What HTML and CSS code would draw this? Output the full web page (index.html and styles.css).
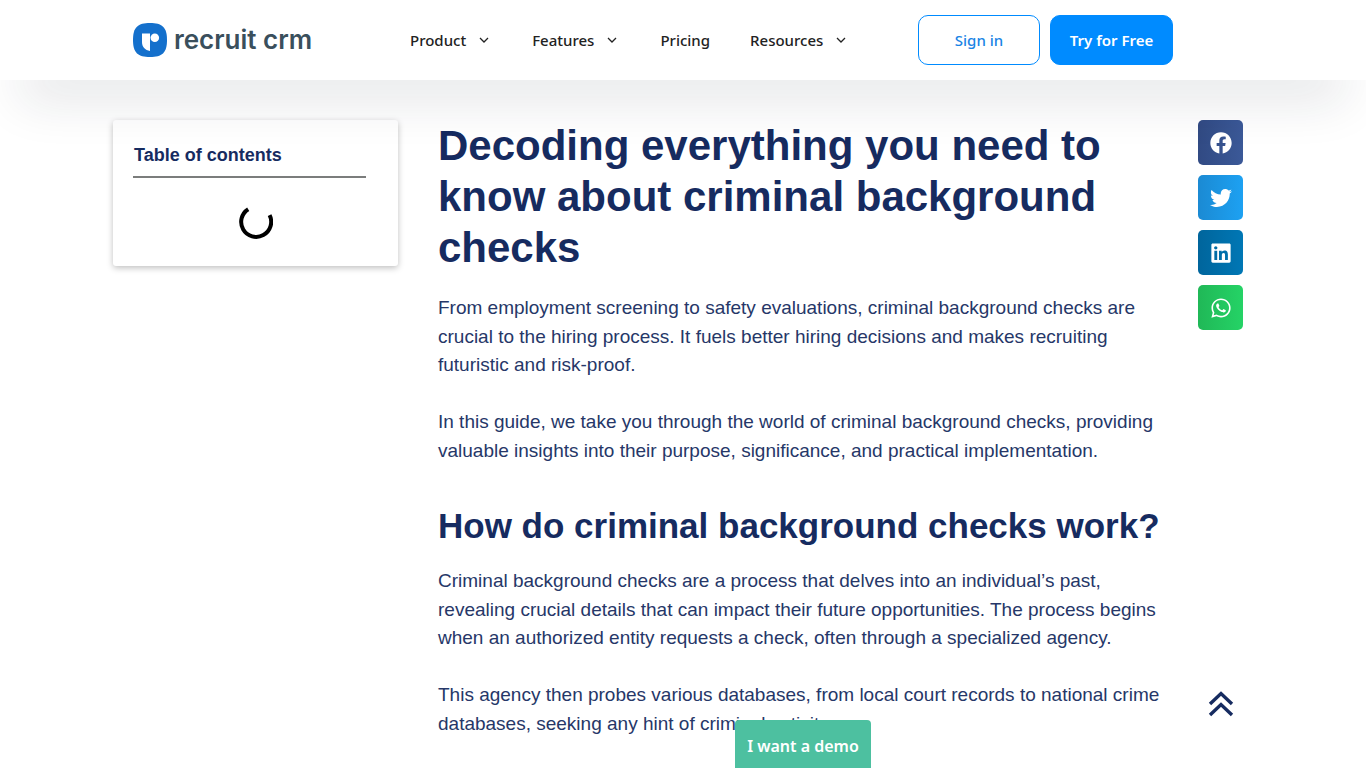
FILE: index.html
```html
<!DOCTYPE html>
<html lang="en">
<head>
  <meta charset="UTF-8" />
  <meta name="viewport" content="width=device-width, initial-scale=1" />
  <title>Criminal background checks - Recruit CRM</title>
  <link rel="stylesheet" href="styles.css">
</head>
<body>
  <header class="site-header">
    <div class="header-inner">
      <a href="#" class="logo">
        <svg width="34" height="34" viewBox="0 0 34 34" aria-hidden="true">
          <path fill="#1470cc" d="M17 0C29 0 34 4 34 17S29 34 17 34 0 30 0 17 5 0 17 0z"/>
          <path fill="#fff" d="M9 10.500h8v17.500c-5-1-8-4-8-9z"/>
          <circle fill="#fff" cx="21.800" cy="14.800" r="4.300"/>
        </svg>
        <span>recruit crm</span>
      </a>
      <nav class="main-nav">
        <a href="#">Product <svg class="arrow" viewBox="0 0 10 6"><path d="M1 1l4 4 4-4"/></svg></a>
        <a href="#">Features <svg class="arrow" viewBox="0 0 10 6"><path d="M1 1l4 4 4-4"/></svg></a>
        <a href="#">Pricing</a>
        <a href="#">Resources <svg class="arrow" viewBox="0 0 10 6"><path d="M1 1l4 4 4-4"/></svg></a>
      </nav>
      <div class="header-buttons">
        <a href="#" class="btn btn-outline">Sign in</a>
        <a href="#" class="btn btn-primary">Try for Free</a>
      </div>
    </div>
  </header>

  <main class="page">
    <aside class="toc">
      <h4>Table of contents</h4>
      <svg class="spinner" width="34" height="34" viewBox="0 0 34 34" aria-hidden="true">
        <path d="M9.200 4.200A15 15 0 1 0 30.600 10.200"/>
      </svg>
    </aside>

    <article class="post">
      <h1>Decoding everything you need to know about criminal background checks</h1>
      <p>From employment screening to safety evaluations, criminal background checks are crucial to the hiring process. It fuels better hiring decisions and makes recruiting futuristic and risk-proof.</p>
      <p>In this guide, we take you through the world of criminal background checks, providing valuable insights into their purpose, significance, and practical implementation.</p>
      <h2>How do criminal background checks work?</h2>
      <p>Criminal background checks are a process that delves into an individual’s past, revealing crucial details that can impact their future opportunities. The process begins when an authorized entity requests a check, often through a specialized agency.</p>
      <p>This agency then probes various databases, from local court records to national crime databases, seeking any hint of criminal activity.</p>
    </article>

    <div class="share">
      <button type="button" class="facebook" aria-label="Share on facebook">
        <svg viewBox="0 0 512 512"><path d="M504 256C504 119 393 8 256 8S8 119 8 256c0 123.780 90.690 226.380 209.250 245V327.690h-63V256h63v-54.640c0-62.150 37-96.480 93.670-96.480 27.140 0 55.520 4.840 55.520 4.840v61h-31.280c-30.800 0-40.410 19.120-40.410 38.730V256h68.780l-11 71.690h-57.780V501C413.310 482.380 504 379.780 504 256z"/></svg>
      </button>
      <button type="button" class="twitter" aria-label="Share on twitter">
        <svg viewBox="0 0 512 512"><path d="M459.370 151.716c.325 4.548.325 9.097.325 13.645 0 138.720-105.583 298.558-298.558 298.558-59.452 0-114.680-17.219-161.137-47.106 8.447.974 16.568 1.299 25.340 1.299 49.055 0 94.213-16.568 130.274-44.832-46.132-.975-84.792-31.188-98.112-72.772 6.498.974 12.995 1.624 19.818 1.624 9.421 0 18.843-1.300 27.614-3.573-48.081-9.747-84.143-51.980-84.143-102.985v-1.299c13.969 7.797 30.214 12.670 47.431 13.319-28.264-18.843-46.781-51.005-46.781-87.391 0-19.492 5.197-37.360 14.294-52.954 51.655 63.675 129.300 105.258 216.365 109.807-1.624-7.797-2.599-15.918-2.599-24.040 0-57.828 46.782-104.934 104.934-104.934 30.213 0 57.502 12.670 76.670 33.137 23.715-4.548 46.456-13.320 66.599-25.340-7.798 24.366-24.366 44.833-46.132 57.827 21.117-2.273 41.584-8.122 60.426-16.243-14.292 20.791-32.161 39.308-52.628 54.253z"/></svg>
      </button>
      <button type="button" class="linkedin" aria-label="Share on linkedin">
        <svg viewBox="-32 0 512 512"><path d="M416 32H31.900C14.300 32 0 46.500 0 64.300v383.400C0 465.500 14.300 480 31.900 480H416c17.600 0 32-14.500 32-32.300V64.300c0-17.800-14.400-32.300-32-32.300zM135.400 416H69V202.200h66.500V416zm-33.200-243c-21.300 0-38.500-17.300-38.500-38.500S80.900 96 102.200 96c21.200 0 38.500 17.300 38.500 38.500 0 21.300-17.200 38.500-38.500 38.500zm282.100 243h-66.400V312c0-24.800-.5-56.700-34.500-56.700-34.600 0-39.900 27-39.900 54.900V416h-66.400V202.200h63.700v29.200h.9c8.900-16.800 30.600-34.500 62.900-34.500 67.200 0 79.700 44.300 79.700 101.900V416z"/></svg>
      </button>
      <button type="button" class="whatsapp" aria-label="Share on whatsapp">
        <svg viewBox="-32 0 512 512"><path d="M380.900 97.100C339 55.100 283.200 32 223.900 32c-122.400 0-222 99.600-222 222 0 39.100 10.200 77.300 29.600 111L0 480l117.700-30.900c32.400 17.700 68.900 27 106.100 27h.1c122.300 0 224.100-99.600 224.100-222 0-59.300-25.200-115-67.100-157zm-157 341.600c-33.200 0-65.700-8.900-94-25.700l-6.700-4-69.800 18.300L72 359.200l-4.400-7c-18.500-29.400-28.200-63.300-28.200-98.200 0-101.700 82.800-184.500 184.600-184.500 49.300 0 95.600 19.200 130.400 54.100 34.800 34.900 56.200 81.200 56.100 130.500 0 101.800-84.900 184.600-186.600 184.600zm101.200-138.200c-5.500-2.800-32.800-16.200-37.900-18-5.100-1.900-8.800-2.800-12.500 2.800-3.700 5.600-14.300 18-17.600 21.800-3.200 3.700-6.500 4.200-12 1.400-32.600-16.300-54-29.100-75.500-66-5.700-9.800 5.700-9.100 16.300-30.300 1.800-3.700.9-6.900-.5-9.700-1.400-2.800-12.500-30.100-17.100-41.200-4.500-10.800-9.100-9.300-12.500-9.500-3.200-.2-6.900-.2-10.600-.2-3.700 0-9.700 1.400-14.800 6.900-5.100 5.600-19.400 19-19.400 46.300 0 27.300 19.900 53.700 22.600 57.400 2.800 3.700 39.100 59.700 94.800 83.800 35.200 15.200 49 16.500 66.600 13.900 10.700-1.600 32.800-13.400 37.400-26.400 4.600-13 4.600-24.100 3.200-26.400-1.300-2.500-5-3.900-10.500-6.600z"/></svg>
      </button>
    </div>
  </main>

  <a href="#" class="back-to-top" aria-label="Scroll back to top">
    <svg width="26" height="26" viewBox="0 0 26 26"><path d="M2 13L13 2.500 24 13M2 24L13 13.500 24 24"/></svg>
  </a>
  <button type="button" class="demo-btn">I want a demo</button>
</body>
</html>
```
FILE: styles.css
```css
* {
  box-sizing: border-box;
}
body {
  margin: 0;
  background: #fff;
  color: #162b60;
  font-family: "Liberation Sans", Arial, sans-serif;
}
a {
  text-decoration: none;
}
.site-header {
  position: sticky;
  top: 0;
  z-index: 10;
  background: #fff;
  box-shadow: 0 40px 50px -20px rgba(23,32,50,0.12);
}
.header-inner {
  display: flex;
  align-items: center;
  max-width: 1140px;
  height: 80px;
  margin: 0 auto;
  padding: 0 80px 0 20px;
}
.logo {
  display: flex;
  align-items: center;
  gap: 7px;
  width: 180px;
  color: #3a4f5c;
  font-family: Inter, sans-serif;
  font-size: 26px;
  font-weight: 600;
  line-height: 32px;
  white-space: nowrap;
}
.main-nav {
  display: flex;
  margin-left: 77px;
}
.main-nav a {
  display: flex;
  align-items: center;
  gap: 13px;
  padding: 0 20px;
  color: #222;
  font-family: "Noto Sans", sans-serif;
  font-size: 15px;
  font-weight: 500;
}
.arrow {
  width: 10px;
  height: 6px;
  margin-right: 3px;
  fill: none;
  stroke: #222;
  stroke-width: 1.3;
}
.header-buttons {
  display: flex;
  gap: 10px;
  margin-left: auto;
}
.btn {
  width: 122px;
  border: 1px solid #008bff;
  border-radius: 10px;
  font-family: "Noto Sans", sans-serif;
  font-size: 15px;
  line-height: 48px;
  text-align: center;
}
.btn-outline {
  color: #1a84e5;
  font-weight: 500;
}
.btn-primary {
  width: 123px;
  background: #008bff;
  color: #fff;
  font-weight: 600;
}
.page {
  display: grid;
  grid-template-columns: 285px 1fr 45px;
  align-items: start;
  max-width: 1140px;
  margin: 0 auto;
  padding: 40px 10px 20px 0;
}
.toc {
  display: flex;
  flex-direction: column;
  align-items: center;
  padding: 21px 32px 27px 20px;
  border-radius: 3px;
  box-shadow: 0 2px 6px rgba(0,0,0,0.25);
}
.toc h4 {
  align-self: stretch;
  margin: 0 0 27px;
  padding: 0 1px 7px;
  border-bottom: 2px solid #7b7d7c;
  font-size: 18px;
  line-height: 28px;
}
.spinner {
  margin-left: 12px;
  fill: none;
  stroke: #000;
  stroke-width: 4;
}
.post {
  padding: 0 30px 0 40px;
}
.post h1 {
  margin: 0 0 21px;
  font-size: 42px;
  line-height: 51px;
}
.post h2 {
  margin: 40px 0 20px;
  font-size: 35px;
  line-height: 42px;
}
.post p {
  margin: 0;
  color: #263768;
  font-size: 19px;
  line-height: 1.5;
}
.post p + p {
  margin-top: 1.5em;
}
.share {
  display: grid;
  gap: 10px;
}
.share button {
  display: flex;
  align-items: center;
  justify-content: center;
  height: 45px;
  padding: 0;
  border: none;
  border-radius: 5px;
  cursor: pointer;
}
.share svg {
  width: 22px;
  height: 22px;
  fill: #fff;
}
.share .facebook {
  background: linear-gradient(90deg, #314a83, #3b5998);
}
.share .twitter {
  background: linear-gradient(90deg, #1b8ad3, #1da1f2);
}
.share .linkedin {
  background: linear-gradient(90deg, #00659c, #0077b5);
}
.share .whatsapp {
  background: linear-gradient(90deg, #20b857, #25d366);
}
.back-to-top {
  position: fixed;
  right: 132px;
  bottom: 51px;
  width: 26px;
  height: 26px;
}
.back-to-top svg {
  display: block;
  fill: none;
  stroke: #162b60;
  stroke-width: 3.4;
}
.demo-btn {
  position: fixed;
  bottom: 0;
  left: 735px;
  width: 136px;
  height: 48px;
  padding: 4px 0 0;
  border: none;
  border-radius: 4px 4px 0 0;
  background: #4dc0a0;
  color: #fff;
  font-family: "Noto Sans", sans-serif;
  font-size: 16px;
  font-weight: 600;
  cursor: pointer;
}
```
